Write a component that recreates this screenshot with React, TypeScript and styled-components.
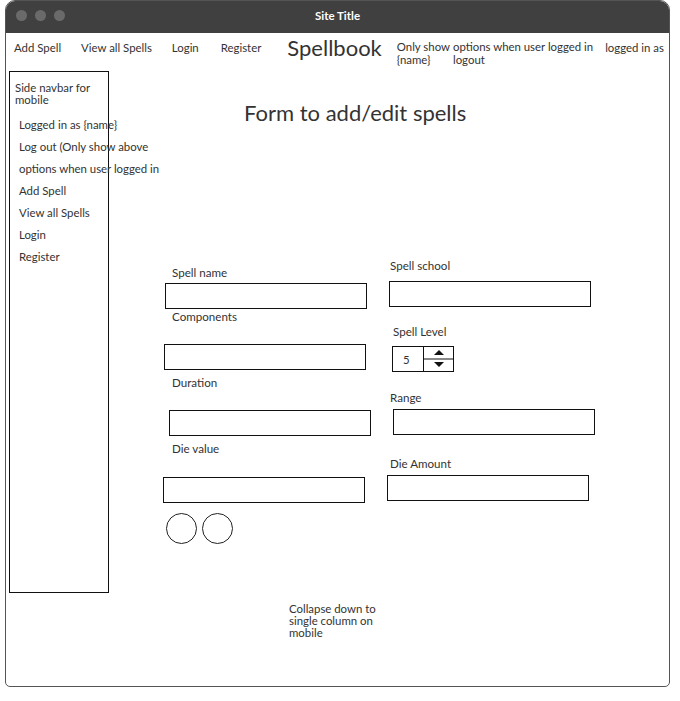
import React from "react";
import styled, { createGlobalStyle } from "styled-components";

const Global = createGlobalStyle`
  html, body { margin: 0; padding: 0; background: #fff; }
  body { font-family: Lato, "Open Sans", sans-serif; color: #333; font-size: 12px; }
  * { box-sizing: border-box; }
`;

const Window = styled.div`
  margin-left: 5px;
  width: 665px;
  height: 687px;
  border: 1px solid #555;
  border-radius: 10px 10px 5px 5px;
  overflow: hidden;
  display: flex;
  flex-direction: column;
  background: #fff;
`;

const TitleBar = styled.div`
  height: 32px;
  flex: none;
  background: #404040;
  display: grid;
  grid-template-columns: 1fr auto 1fr;
  align-items: center;
  padding-bottom: 4px;
`;

const Dots = styled.div`
  display: flex;
  gap: 8px;
  padding-left: 10px;
`;

const Dot = styled.span`
  width: 11px;
  height: 11px;
  border-radius: 50%;
  background: #6a6a6a;
`;

const Title = styled.div`
  color: #fff;
  font-weight: 700;
  font-size: 11.5px;
`;

const NavBar = styled.div`
  height: 38px;
  flex: none;
  display: flex;
  align-items: flex-start;
  padding: 8px 0 0 8px;
  white-space: nowrap;
`;

const NavLink = styled.span<{ $ml?: number }>`
  font-size: 11.4px;
  line-height: 14px;
  margin-left: ${(p) => p.$ml ?? 0}px;
`;

const Brand = styled.span<{ $ml?: number }>`
  font-size: 22px;
  line-height: 22px;
  margin-top: -4px;
  margin-left: ${(p) => p.$ml ?? 0}px;
`;

const NavStack = styled.span<{ $ml?: number }>`
  display: flex;
  flex-direction: column;
  font-size: 11.4px;
  line-height: 12.5px;
  margin-left: ${(p) => p.$ml ?? 0}px;
`;

const Body = styled.div`
  flex: 1;
  display: flex;
  align-items: flex-start;
`;

const Sidebar = styled.nav`
  margin-left: 3px;
  width: 100px;
  height: 522px;
  flex: none;
  border: 1px solid #111;
  padding: 10px 0 0 5px;
  white-space: nowrap;
`;

const SideHeading = styled.div`
  font-size: 11.4px;
  line-height: 12px;
  white-space: normal;
  width: 85px;
  margin-bottom: 8px;
`;

const SideItem = styled.div`
  font-size: 11.4px;
  line-height: 22px;
  padding-left: 4px;
`;

const Main = styled.main`
  flex: 1;
  display: flex;
  flex-direction: column;
  padding-top: 29px;
`;

const Heading = styled.h1`
  margin: 0 0 0 135px;
  font-size: 22px;
  line-height: 26px;
  font-weight: 400;
  color: #333;
`;

const Form = styled.div`
  display: flex;
  margin: 133px 0 0 54px;
  align-items: flex-start;
`;

const Column = styled.div<{ $w: number; $ml?: number; $pt?: number }>`
  display: flex;
  flex-direction: column;
  width: ${(p) => p.$w}px;
  margin-left: ${(p) => p.$ml ?? 0}px;
  padding-top: ${(p) => p.$pt ?? 0}px;
`;

const Field = styled.div<{ $mt: number }>`
  display: flex;
  flex-direction: column;
  align-items: flex-start;
  margin-top: ${(p) => p.$mt}px;
`;

const Label = styled.label<{ $x: number; $gap: number }>`
  font-size: 11.6px;
  line-height: 14px;
  margin-left: ${(p) => p.$x}px;
  margin-bottom: ${(p) => p.$gap}px;
  color: #333;
`;

const Input = styled.div<{ $x: number }>`
  width: 202px;
  height: 26px;
  margin-left: ${(p) => p.$x}px;
  border: 1px solid #111;
  background: #fff;
`;

const Stepper = styled.div<{ $x: number }>`
  display: flex;
  width: 62px;
  height: 26px;
  margin-left: ${(p) => p.$x}px;
  border: 1px solid #111;
`;

const StepValue = styled.div`
  width: 31px;
  border-right: 1px solid #111;
  display: flex;
  align-items: center;
  padding-left: 10px;
  font-size: 11.4px;
`;

const StepArrows = styled.div`
  flex: 1;
  display: flex;
  flex-direction: column;
  align-items: center;
  justify-content: space-between;
  padding: 3px 0 4px;
`;

const Divider = styled.div`
  width: 100%;
  height: 2px;
  background: #888;
`;

const Arrow = styled.span<{ $up?: boolean }>`
  width: 0;
  height: 0;
  border-left: 5px solid transparent;
  border-right: 5px solid transparent;
  ${(p) => (p.$up ? "border-bottom: 5px solid #111;" : "border-top: 5px solid #111;")}
`;

const Buttons = styled.div`
  display: flex;
  gap: 5px;
  margin: 10px 0 0 3px;
`;

const Circle = styled.button`
  width: 31px;
  height: 31px;
  border-radius: 50%;
  border: 1px solid #222;
  background: #fff;
  padding: 0;
`;

const Note = styled.div`
  margin: 59px 0 0 180px;
  width: 92px;
  font-size: 11.4px;
  line-height: 12px;
`;

export default function App() {
  return (
    <>
      <Global />
      <Window>
        <TitleBar>
          <Dots>
            <Dot />
            <Dot />
            <Dot />
          </Dots>
          <Title>Site Title</Title>
          <div />
        </TitleBar>
        <NavBar>
          <NavLink>Add Spell</NavLink>
          <NavLink $ml={20}>View all Spells</NavLink>
          <NavLink $ml={20}>Login</NavLink>
          <NavLink $ml={22}>Register</NavLink>
          <Brand $ml={26}>Spellbook</Brand>
          <NavStack $ml={15}>
            <span>Only show</span>
            <span>{"{name}"}</span>
          </NavStack>
          <NavStack $ml={3}>
            <span>options when user logged in</span>
            <span>logout</span>
          </NavStack>
          <NavLink $ml={12}>logged in as</NavLink>
        </NavBar>
        <Body>
          <Sidebar>
            <SideHeading>Side navbar for mobile</SideHeading>
            <SideItem>Logged in as {"{name}"}</SideItem>
            <SideItem>Log out (Only show above</SideItem>
            <SideItem>options when user logged in</SideItem>
            <SideItem>Add Spell</SideItem>
            <SideItem>View all Spells</SideItem>
            <SideItem>Login</SideItem>
            <SideItem>Register</SideItem>
          </Sidebar>
          <Main>
            <Heading>Form to add/edit spells</Heading>
            <Form>
              <Column $w={208} $pt={7}>
                <Field $mt={0}>
                  <Label $x={9} $gap={3}>Spell name</Label>
                  <Input $x={2} />
                </Field>
                <Field $mt={1}>
                  <Label $x={9} $gap={20}>Components</Label>
                  <Input $x={1} />
                </Field>
                <Field $mt={6}>
                  <Label $x={9} $gap={20}>Duration</Label>
                  <Input $x={6} />
                </Field>
                <Field $mt={6}>
                  <Label $x={9} $gap={21}>Die value</Label>
                  <Input $x={0} />
                </Field>
                <Buttons>
                  <Circle aria-label="button one" />
                  <Circle aria-label="button two" />
                </Buttons>
              </Column>
              <Column $w={210} $ml={16}>
                <Field $mt={0}>
                  <Label $x={3} $gap={8}>Spell school</Label>
                  <Input $x={2} />
                </Field>
                <Field $mt={18}>
                  <Label $x={6} $gap={7}>Spell Level</Label>
                  <Stepper $x={5}>
                    <StepValue>5</StepValue>
                    <StepArrows>
                      <Arrow $up />
                      <Divider />
                      <Arrow />
                    </StepArrows>
                  </Stepper>
                </Field>
                <Field $mt={19}>
                  <Label $x={3} $gap={4}>Range</Label>
                  <Input $x={6} />
                </Field>
                <Field $mt={22}>
                  <Label $x={3} $gap={4}>Die Amount</Label>
                  <Input $x={0} />
                </Field>
              </Column>
            </Form>
            <Note>Collapse down to single column on mobile</Note>
          </Main>
        </Body>
      </Window>
    </>
  );
}
